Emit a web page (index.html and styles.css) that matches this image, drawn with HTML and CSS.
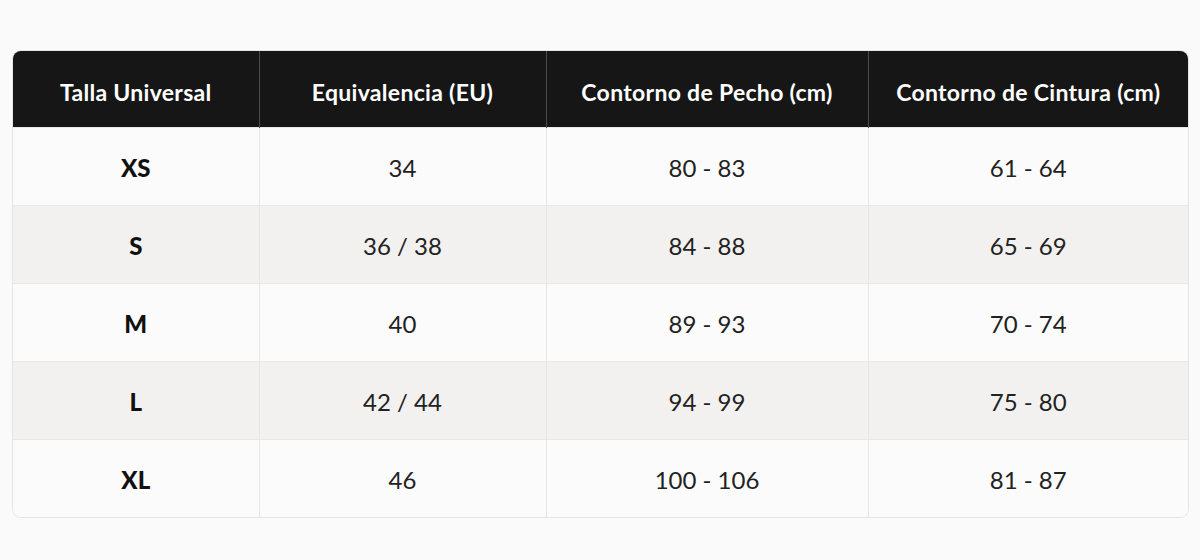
FILE: index.html
```html
<!DOCTYPE html>
<html lang="es">
<head>
<meta charset="utf-8">
<link rel="stylesheet" href="styles.css">
</head>
<body>
<div class="wrap">
  <table class="sizes">
    <colgroup>
      <col class="c1"><col class="c2"><col class="c3"><col class="c4">
    </colgroup>
    <thead>
      <tr>
        <th>Talla Universal</th>
        <th>Equivalencia (EU)</th>
        <th>Contorno de Pecho (cm)</th>
        <th>Contorno de Cintura (cm)</th>
      </tr>
    </thead>
    <tbody>
      <tr><td class="size">XS</td><td>34</td><td>80 - 83</td><td>61 - 64</td></tr>
      <tr class="alt"><td class="size">S</td><td>36 / 38</td><td>84 - 88</td><td>65 - 69</td></tr>
      <tr><td class="size">M</td><td>40</td><td>89 - 93</td><td>70 - 74</td></tr>
      <tr class="alt"><td class="size">L</td><td>42 / 44</td><td>94 - 99</td><td>75 - 80</td></tr>
      <tr><td class="size">XL</td><td>46</td><td>100 - 106</td><td>81 - 87</td></tr>
    </tbody>
  </table>
</div>
</body>
</html>
```
FILE: styles.css
```css
html, body {
  margin: 0;
  padding: 0;
  background: #fafafa;
}
body {
  font-family: Lato, "Open Sans", sans-serif;
  color: #1a1a1a;
  padding: 50px 11px 0 12px;
}
.wrap {
  width: 1177px;
  border: 1px solid #e4e4e4;
  border-radius: 9px;
  overflow: hidden;
  box-sizing: border-box;
}
.sizes {
  width: 100%;
  border-collapse: collapse;
  table-layout: fixed;
}
.c1 { width: 246px; }
.c2 { width: 287px; }
.c3 { width: 322px; }
.c4 { width: auto; }
th {
  background: #161616;
  color: #ffffff;
  font-weight: 700;
  font-size: 23px;
  letter-spacing: 0.3px;
  height: 76px;
  padding: 6px 0 0;
  box-sizing: border-box;
  text-align: center;
  border-left: 1px solid #4a4a4a;
}
th:first-child, td:first-child { border-left: none; }
td {
  height: 78px;
  padding: 2px 0 0;
  box-sizing: border-box;
  text-align: center;
  font-size: 24px;
  font-weight: 400;
  color: #222;
  background: #fbfbfb;
  border-left: 1px solid #e6e6e6;
  border-top: 1px solid #e8e8e8;
}
tr.alt td { background: #f2f1ef; }
td.size {
  font-weight: 900;
  font-size: 24px;
  color: #111;
}
```
